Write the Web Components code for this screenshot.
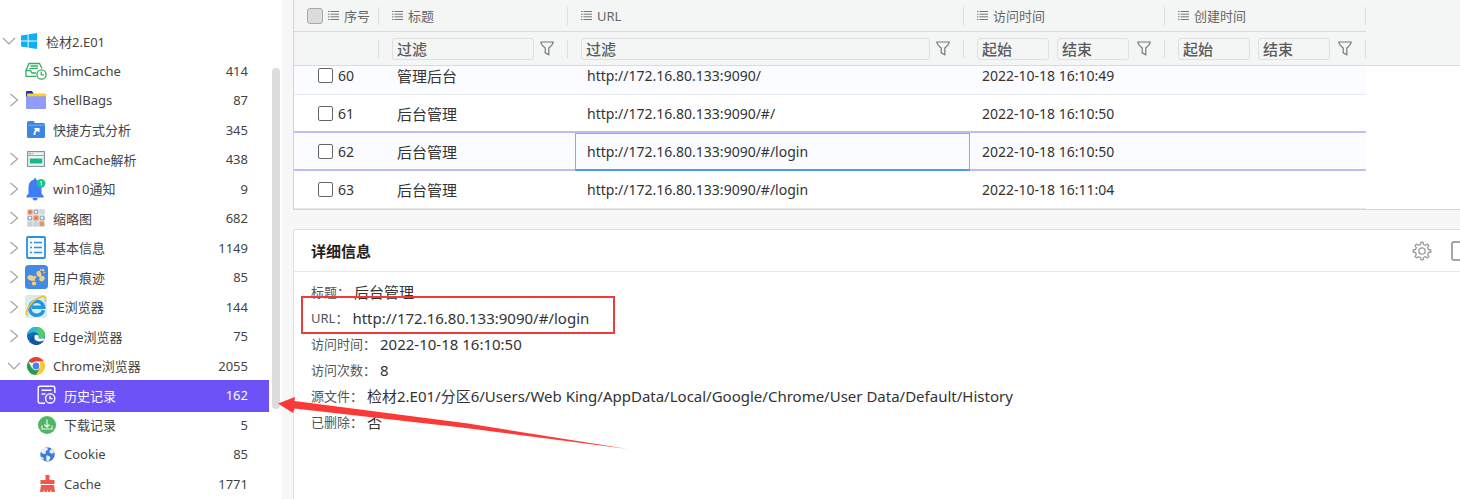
<!DOCTYPE html>
<html lang="zh-CN">
<head>
<meta charset="utf-8">
<title>历史记录</title>
<style>
html,body{margin:0;height:100%;overflow:hidden}
body{font-family:"Noto Sans","Noto Sans CJK SC",sans-serif;background:#f7f7f8;color:#444}
</style>
</head>
<body>
<app-shell>
  <tree-item slot="tree" level="0" open label="检材2.E01"><svg width="16" height="16" viewBox="0 0 16 16" fill="#0bb0f5"><path d="M0 2.4 6.7 1.4V7.6H0zM7.6 1.3 16 0V7.6H7.6zM0 8.4H6.7V14.6L0 13.6zM7.6 8.4H16V16L7.6 14.7z"/></svg></tree-item>
  <tree-item slot="tree" level="1" leaf label="ShimCache" count="414"><svg width="22" height="18" viewBox="0 0 22 18" fill="none" stroke="#35ae63" stroke-width="1.3"><path d="M11 14.3H1V8.5L4 1.5H14.5L17 6.5M1 8.5H5.5L7 11H11M5.5 4H13M4.5 6.3H13"/><circle cx="16.5" cy="12.5" r="4.6"/><path d="M16.3 9.6V12.8H19"/></svg></tree-item>
  <tree-item slot="tree" level="1" label="ShellBags" count="87"><svg width="20" height="18" viewBox="0 0 20 18"><path d="M0 1Q0 0 1 0H6L7.5 2.5V6H0z" fill="#20339b"/><path d="M1 2.5H20V8H1z" fill="#ffd117"/><rect y="5.3" width="20" height="12.7" rx="1" fill="#8f9cfb"/></svg></tree-item>
  <tree-item slot="tree" level="1" leaf label="快捷方式分析" count="345"><svg width="18" height="17" viewBox="0 0 18 17"><path d="M0 1.5Q0 0 1.5 0H6.5L8 2H16.5Q18 2 18 3.5V15.5Q18 17 16.5 17H1.5Q0 17 0 15.5z" fill="#3d87e2"/><path d="M1 4.2H17" stroke="#72adf1" stroke-width="1"/><path d="M7.5 14Q7 10 11 8.5M7.5 7.8H11.6V11" fill="none" stroke="#fff" stroke-width="1.8"/></svg></tree-item>
  <tree-item slot="tree" level="1" label="AmCache解析" count="438"><svg width="18" height="16" viewBox="0 0 18 16"><rect x=".6" y=".6" width="16.8" height="14.8" fill="#eef4f7" stroke="#8191a1" stroke-width="1.1"/><path d="M1 4.5H17" stroke="#8191a1" stroke-width=".8"/><circle cx="3" cy="2.6" r=".9" fill="#e86562"/><circle cx="5.5" cy="2.6" r=".9" fill="#f0ba59"/><rect x="2.8" y="7.5" width="12.5" height="5" fill="#18b78c"/></svg></tree-item>
  <tree-item slot="tree" level="1" label="win10通知" count="9"><svg width="20" height="24" viewBox="0 0 20 24"><path d="M9 1Q10.3 1 10.3 2.7Q15.5 4 15.5 10V16.5L17.7 19V20.5H.5V19L2.5 16.5V10Q2.5 4 7.7 2.7Q7.7 1 9 1z" fill="#3f7df5"/><path d="M6.4 21H11.8Q11.5 23.5 9 23.5Q6.7 23.5 6.4 21z" fill="#3f7df5"/><circle cx="15" cy="6.3" r="4.4" fill="#19c58c"/><path d="M14.2 5.1 15.4 4.3V8.4" fill="none" stroke="#fff"/></svg></tree-item>
  <tree-item slot="tree" level="1" label="缩略图" count="682"><svg width="18" height="18" viewBox="0 0 18 18"><rect width="18" height="18" fill="#e4dccf"/><path d="M1 1H6V6H1zM6 6H12V12H6zM12 12H17V17H12z" fill="#ec9165"/><path d="M6 12H12V17H6zM1 12H6V17H1z" fill="#b9d6ea"/><path d="M12 1H17V6H12z" fill="#c9deea"/><g fill="#eef3ec" stroke="#7ba2d6" stroke-width="1.2"><circle cx="9" cy="3" r="2"/><circle cx="3" cy="9" r="2"/><circle cx="15" cy="9" r="2"/></g><path d="M0 6H18M0 12H18M6 0V18M12 0V18" stroke="#f7efe2" stroke-width=".8"/><path d="M2 4 4 2M8 10 10 8" stroke="#c85435"/></svg></tree-item>
  <tree-item slot="tree" level="1" label="基本信息" count="1149"><svg width="20" height="23" viewBox="0 0 20 23" fill="none" stroke="#2d8fe0"><rect x="1" y="1" width="18" height="21" rx="1" fill="#f6fbff" stroke-width="1.8"/><path d="M4 6.5H6M4 11.5H6M4 16.5H6M8 6.5H16M8 11.5H16M8 16.5H16" stroke-width="1.7"/></svg></tree-item>
  <tree-item slot="tree" level="1" label="用户痕迹" count="85"><svg width="23" height="24" viewBox="0 0 23 24"><rect width="23" height="24" rx="3.5" fill="#438be2"/><g fill="#f6cd87"><ellipse cx="6.2" cy="13" rx="3.8" ry="2.6" transform="rotate(20 6.2 13)"/><ellipse cx="9" cy="18.4" rx="2.2" ry="2"/><ellipse cx="14" cy="9" rx="2.3" ry="3.2" transform="rotate(-20 14 9)"/><ellipse cx="17" cy="13.6" rx="2.4" ry="3" transform="rotate(35 17 13.6)"/><circle cx="10.2" cy="12" r="1.2"/><circle cx="18" cy="5" r="1.2"/><circle cx="15.6" cy="5" r=".9"/><circle cx="19.3" cy="7.4" r=".9"/><circle cx="9.4" cy="15" r=".9"/></g></svg></tree-item>
  <tree-item slot="tree" level="1" label="IE浏览器" count="144"><svg width="22" height="23" viewBox="0 0 22 23"><rect width="22" height="23" rx="3" fill="#d9eaf0"/><path d="M18.5 15.2A7 7 0 1 1 18.7 12.3H7" fill="none" stroke="#2197e2" stroke-width="3.4"/><path d="M2.5 20.5C-.5 16 6 6.5 13.5 3Q19-.1 20.2 2.7Q20.8 4.4 19.8 7" fill="none" stroke="#f0bf37" stroke-width="1.7"/></svg></tree-item>
  <tree-item slot="tree" level="1" label="Edge浏览器" count="75"><svg width="18" height="18" viewBox="0 0 18 18"><circle cx="9" cy="9" r="9" fill="#1268bd"/><path d="M0 8.5Q1 0 9.2 0Q17.3.5 18 7.6Q17.6 11.8 12.5 11.6Q10.5 11.2 11.5 9.3Q11.7 5.8 7.6 5.3Q3 5 0 8.5z" fill="#29b9d6"/><path d="M11 .3Q17.6 2 18 7.6Q17.6 11.8 12.5 11.6Q10.5 11.2 11.5 9.3Q12.2 6 9 4.5z" fill="#53cc6c"/><path d="M6.3 8.2Q5.7 15 12.5 15Q15 15 17 13.6Q14 18 9 18Q3.5 17.4 3.4 12.3Q3.6 9.5 6.3 8.2z" fill="#1751a1"/><path d="M7.8 8.2Q6 13 11.2 14.3Q15 14.8 17.3 12.7L16.3 11Q14.4 12 12.5 11.6Q10.5 11.2 11.5 9.3Q11 7 7.8 8.2z" fill="#fff"/></svg></tree-item>
  <tree-item slot="tree" level="1" open label="Chrome浏览器" count="2055"><svg width="18" height="18" viewBox="0 0 18 18"><path d="M9 0A9 9 0 0 1 16.8 4.5H9L4.8 6 1.2 4.5A9 9 0 0 1 9 0z" fill="#e34133"/><path d="M16.8 4.5A9 9 0 0 1 9 18L13 11V4.5z" fill="#fbc92d"/><path d="M1.2 4.5A9 9 0 0 0 9 18L13 11 5 11z" fill="#259c50"/><circle cx="9" cy="9" r="4.3" fill="#fff"/><circle cx="9" cy="9" r="3.4" fill="#4383ef"/></svg></tree-item>
  <tree-item slot="tree" level="2" leaf selected label="历史记录" count="162"><svg width="20" height="20" viewBox="0 0 20 20" fill="none" stroke="#fff" stroke-width="1.4"><path d="M8 18.2H3Q1.2 18.2 1.2 16.4V3Q1.2 1.2 3 1.2H16Q17.8 1.2 17.8 3V8M4.5 5.3H14.5M4.5 9H8.5"/><circle cx="13.2" cy="13.4" r="4.6"/><path d="M13 10.8V13.6H15.6"/></svg></tree-item>
  <tree-item slot="tree" level="2" leaf label="下载记录" count="5"><svg width="18" height="18" viewBox="0 0 18 18"><circle cx="9" cy="9" r="9" fill="#50b564"/><path d="M9 3.5V11M6.3 8.5 9 11.2 11.7 8.5M4 9.5V13H14V9.5" fill="none" stroke="#e9f8ea" stroke-width="1.2"/></svg></tree-item>
  <tree-item slot="tree" level="2" leaf label="Cookie" count="85"><svg width="15" height="15" viewBox="0 0 15 15"><circle cx="7.5" cy="7.5" r="7.2" fill="#3c7bd8"/><path d="M0 4 3 1 7 .2 8 2.5 5.5 4.4 6 6.5 3.6 7.1 1.8 5.8zM9.8 3 12 2 14.4 5.4 11.7 6.8 9.5 5.6zM6.5 8.3 9.5 9.2 10.5 11 8.2 14.5 6.6 14 6.2 11zM1 9.5 3.3 10.5 3.8 13Q2 12 1 9.5z" fill="#e5f0fc"/></svg></tree-item>
  <tree-item slot="tree" level="2" leaf label="Cache" count="1771"><svg width="15" height="17" viewBox="0 0 15 17" fill="#f1574d"><path d="M5.5 0H9.5V5H14.5V9H.5V5H5.5zM1 10H14L15 17H11.5L11 14.2 10.2 17H8.2L7.7 14.2 7 17H4.6L4 14.2 3.3 17H0z"/></svg></tree-item>
  <record-grid slot="main"></record-grid>
  <detail-panel slot="main" heading="详细信息">
    <detail-row label="标题">后台管理</detail-row>
    <detail-row label="URL" marked>http://172.16.80.133:9090/#/login</detail-row>
    <detail-row label="访问时间">2022-10-18 16:10:50</detail-row>
    <detail-row label="访问次数">8</detail-row>
    <detail-row label="源文件">检材2.E01/分区6/Users/Web King/AppData/Local/Google/Chrome/User Data/Default/History</detail-row>
    <detail-row label="已删除">否</detail-row>
  </detail-panel>
</app-shell>
<script>
class BaseElement extends HTMLElement {
  constructor() { super(); this.attachShadow({mode: 'open'}); }
  connectedCallback() { this.shadowRoot.innerHTML = this.render(); }
  attr(name) { return this.getAttribute(name) || ''; }
}

customElements.define('app-shell', class extends BaseElement {
  render() { return `<style>
    :host{display:flex;position:relative;min-height:100vh;overflow:hidden}
    aside{display:flex;flex:none;width:282px;background:#fff}
    nav{flex:none;width:269px;padding-top:27px}
    .track{flex:1;padding:68px 2px 0 3px}
    .thumb{height:341px;border-radius:4px;background:#dcdcdc}
    main{flex:1;min-width:0;display:flex;flex-direction:column;gap:19px;padding-left:11px}
    .arrow{position:absolute;left:278px;top:396px;pointer-events:none}
    </style>
    <aside><nav aria-label="证据"><slot name="tree"></slot></nav><div class="track"><div class="thumb"></div></div></aside>
    <main><slot name="main"></slot></main>
    <svg class="arrow" width="352" height="54" viewBox="0 0 352 54" fill="#fb3a38"><path d="M0 7.5 17 1 16.5 5 190 27.5 350 53 188 32 16.5 12.5 15 17z"/></svg>`; }
});

customElements.define('tree-item', class extends BaseElement {
  render() {
    const open = this.hasAttribute('open');
    const chevron = this.hasAttribute('leaf') ? '' :
      `<svg width="14" height="14" viewBox="0 0 14 14" fill="none" stroke="#a4a4a4" stroke-width="1.2"><path d="${open ? 'M1 4 7 10 13 4' : 'M3.5 1 10.5 7 3.5 13'}"/></svg>`;
    return `<style>
    :host{display:block;height:30px}
    :host(:nth-of-type(even)){height:29px}
    button{display:flex;align-items:center;box-sizing:border-box;width:100%;height:100%;margin:0;border:0;padding:0 21px 2px 4px;background:none;color:#444;font:inherit;font-size:13px;text-align:left}
    .chevron{display:flex;justify-content:center;width:20px}
    .icon{display:flex;justify-content:center;width:24px}
    .label{flex:1;margin-left:5px;white-space:nowrap}
    :host([level="0"]) button{padding-left:0}
    :host([level="0"]) .chevron{width:17px}
    :host([level="2"]) button{padding-left:35px}
    :host([level="2"]) .chevron{display:none}
    :host([selected]) button{background:#6c52f7;color:#fff;box-shadow:0 1px #6c52f7,0 -1px #6c52f7}
    </style>
    <button type="button"><span class="chevron">${chevron}</span><span class="icon"><slot></slot></span><span class="label">${this.attr('label')}</span><span>${this.attr('count')}</span></button>`;
  }
});

customElements.define('filter-box', class extends BaseElement {
  render() { return `<style>
    :host{display:flex;flex:1;min-width:0}
    input{box-sizing:border-box;width:100%;height:22px;border:1px solid #dfe1e1;border-radius:3px;padding:0 4px;background:#f4f6f5;color:#444;font:inherit;font-size:15px;font-weight:500;outline:0}
    input::placeholder{color:#5c5c5c;opacity:1}
    </style><input type="text" placeholder="${this.attr('hint')}" aria-label="${this.attr('hint')}">`; }
});

customElements.define('record-grid', class extends BaseElement {
  render() {
    const menu = '<svg width="11" height="9" viewBox="0 0 11 9" stroke="#777"><path d="M0 .5H1.5M2.5 .5H11M0 3.2H1.5M2.5 3.2H11M0 5.8H1.5M2.5 5.8H11M0 8.5H1.5M2.5 8.5H11"/></svg>';
    const funnel = '<button type="button" aria-label="筛选"><svg width="14" height="15" viewBox="0 0 14 15" fill="none" stroke="#777" stroke-width="1.2"><path d="M.8 1H13.2Q12.8 4 8.8 7V13.8L5.2 11.8V7Q1.2 4 .8 1z"/></svg></button>';
    const heads = ['标题', 'URL', '访问时间', '创建时间'].map(t => `<th><div class="head">${menu}<span>${t}</span></div></th>`).join('');
    const one = `<td><div class="filter"><filter-box hint="过滤"></filter-box>${funnel}</div></td>`;
    const two = `<td><div class="filter pair"><filter-box hint="起始"></filter-box><filter-box hint="结束"></filter-box>${funnel}</div></td>`;
    const rows = [['60', '管理后台', '', '16:10:49'], ['61', '后台管理', '#/', '16:10:50'], ['62', '后台管理', '#/login', '16:10:50'], ['63', '后台管理', '#/login', '16:11:04']]
      .map(([n, title, path, time]) => `<tr class="r${n}"><td><label><input type="checkbox">${n}</label></td><td class="title">${title}</td><td class="url">http://172.16.80.133:9090/${path}</td><td>2022-10-18 ${time}</td></tr>`).join('');
    return `<style>
    :host{display:block;border-left:1px solid #d3d6d8;border-bottom:1px solid #d3d6d8;background:#fff}
    table{border-spacing:0;table-layout:fixed;width:1072px}
    th,td{box-sizing:border-box;padding:0;text-align:left;font-weight:400}
    .top{background:#f4f6f5;border-bottom:1px solid #d9dcdc}
    .top th{height:32px;border-bottom:1px solid #d9dcdc;color:#666;font-size:13px}
    .top td{height:33px}
    .head,.filter{display:flex;align-items:center;box-sizing:border-box;border-right:1px solid #dcdfdf;height:18px}
    .head{gap:5px;padding-left:13px}
    .filter{padding:0 13px 0 13px;gap:6px}
    .filter.pair{gap:8px}
    button{display:flex;border:0;padding:0;background:none}
    .head input{width:16px;height:16px;margin:0;appearance:none;border:1px solid #aaa;border-radius:3px;background:#dcdcdc}
    .body{display:flex;align-items:flex-end;height:143px;overflow:hidden}
    .body td{height:38px;border-bottom:1px solid #e8ebee;padding-left:12px;color:#333;font-size:14px;white-space:nowrap}
    .body td:first-child{padding-left:24px}
    .body td.title{font-size:15px}
    .body tr:nth-child(odd){background:#fbfcff}
    .body .r61 td,.body .r62 td{border-bottom:2px solid #bdbbf9}
    .body .r62 td.url{border:1px solid #66b8f4;border-bottom:2px solid #4a9cf0;padding:0 0 1px 11px}
    label{display:flex;align-items:center;gap:5px}
    label input{appearance:none;box-sizing:border-box;width:15px;height:15px;margin:0;border:1px solid #666;border-radius:2px;background:#fff}
    </style>
    <div class="top"><table><colgroup><col style="width:85px"><col style="width:189px"><col style="width:396px"><col style="width:201px"><col style="width:201px"></colgroup>
    <thead><tr><th><div class="head"><input type="checkbox" aria-label="全选">${menu}<span>序号</span></div></th>${heads}</tr></thead>
    <tbody><tr><td><div class="filter"></div></td>${one}${one}${two}${two}</tr></tbody></table></div>
    <div class="body"><table><colgroup><col style="width:91px"><col style="width:190px"><col style="width:395px"><col></colgroup><tbody>${rows}</tbody></table></div>`;
  }
});

customElements.define('detail-panel', class extends BaseElement {
  render() { return `<style>
    :host{display:block;flex:1;border-left:1px solid #dfe0e2;border-top:1px solid #dfe0e2;background:#fff}
    header{display:flex;align-items:center;height:41px;border-bottom:1px solid #e8e9eb;padding-left:17px;overflow:hidden}
    h2{flex:1;margin:0;color:#222;font-size:15px;font-weight:700}
    button{display:flex;flex:none;border:0;padding:0;background:none}
    .gear{margin-right:19px}
    .expand{margin-right:-11px}
    dl{margin:0;padding:7px 17px}
    </style>
    <header><h2>${this.attr('heading')}</h2>
    <button class="gear" type="button" aria-label="设置"><svg width="20" height="20" viewBox="0 0 20 20" fill="none" stroke="#999" stroke-width="1.3"><circle cx="10" cy="10" r="3.2"/><path d="M8.5 3.5 9 1.2H11L11.5 3.5 13.5 4.3 15.5 3.1 16.9 4.5 15.7 6.5 16.5 8.5 18.8 9V11L16.5 11.5 15.7 13.5 16.9 15.5 15.5 16.9 13.5 15.7 11.5 16.5 11 18.8H9L8.5 16.5 6.5 15.7 4.5 16.9 3.1 15.5 4.3 13.5 3.5 11.5 1.2 11V9L3.5 8.5 4.3 6.5 3.1 4.5 4.5 3.1 6.5 4.3z" stroke-linejoin="round"/></svg></button>
    <button class="expand" type="button" aria-label="展开"><svg width="20" height="20" viewBox="0 0 20 20" fill="none" stroke="#888" stroke-width="1.5"><rect x="1" y="1" width="18" height="18" rx="2"/></svg></button></header>
    <dl><slot></slot></dl>`; }
});

customElements.define('detail-row', class extends BaseElement {
  render() { return `<style>
    :host{display:flex;position:relative;width:max-content;height:26px;line-height:26px;white-space:nowrap}
    dt{font-size:13px;color:#555}
    dd{margin:0 0 0 4px;font-size:15px;color:#333}
    :host([marked])::after{content:"";position:absolute;inset:-9px -26px -3px -10px;border:2px solid #ee3b3b}
    </style><dt>${this.attr('label')}：</dt><dd><slot></slot></dd>`; }
});
</script>
</body>
</html>
